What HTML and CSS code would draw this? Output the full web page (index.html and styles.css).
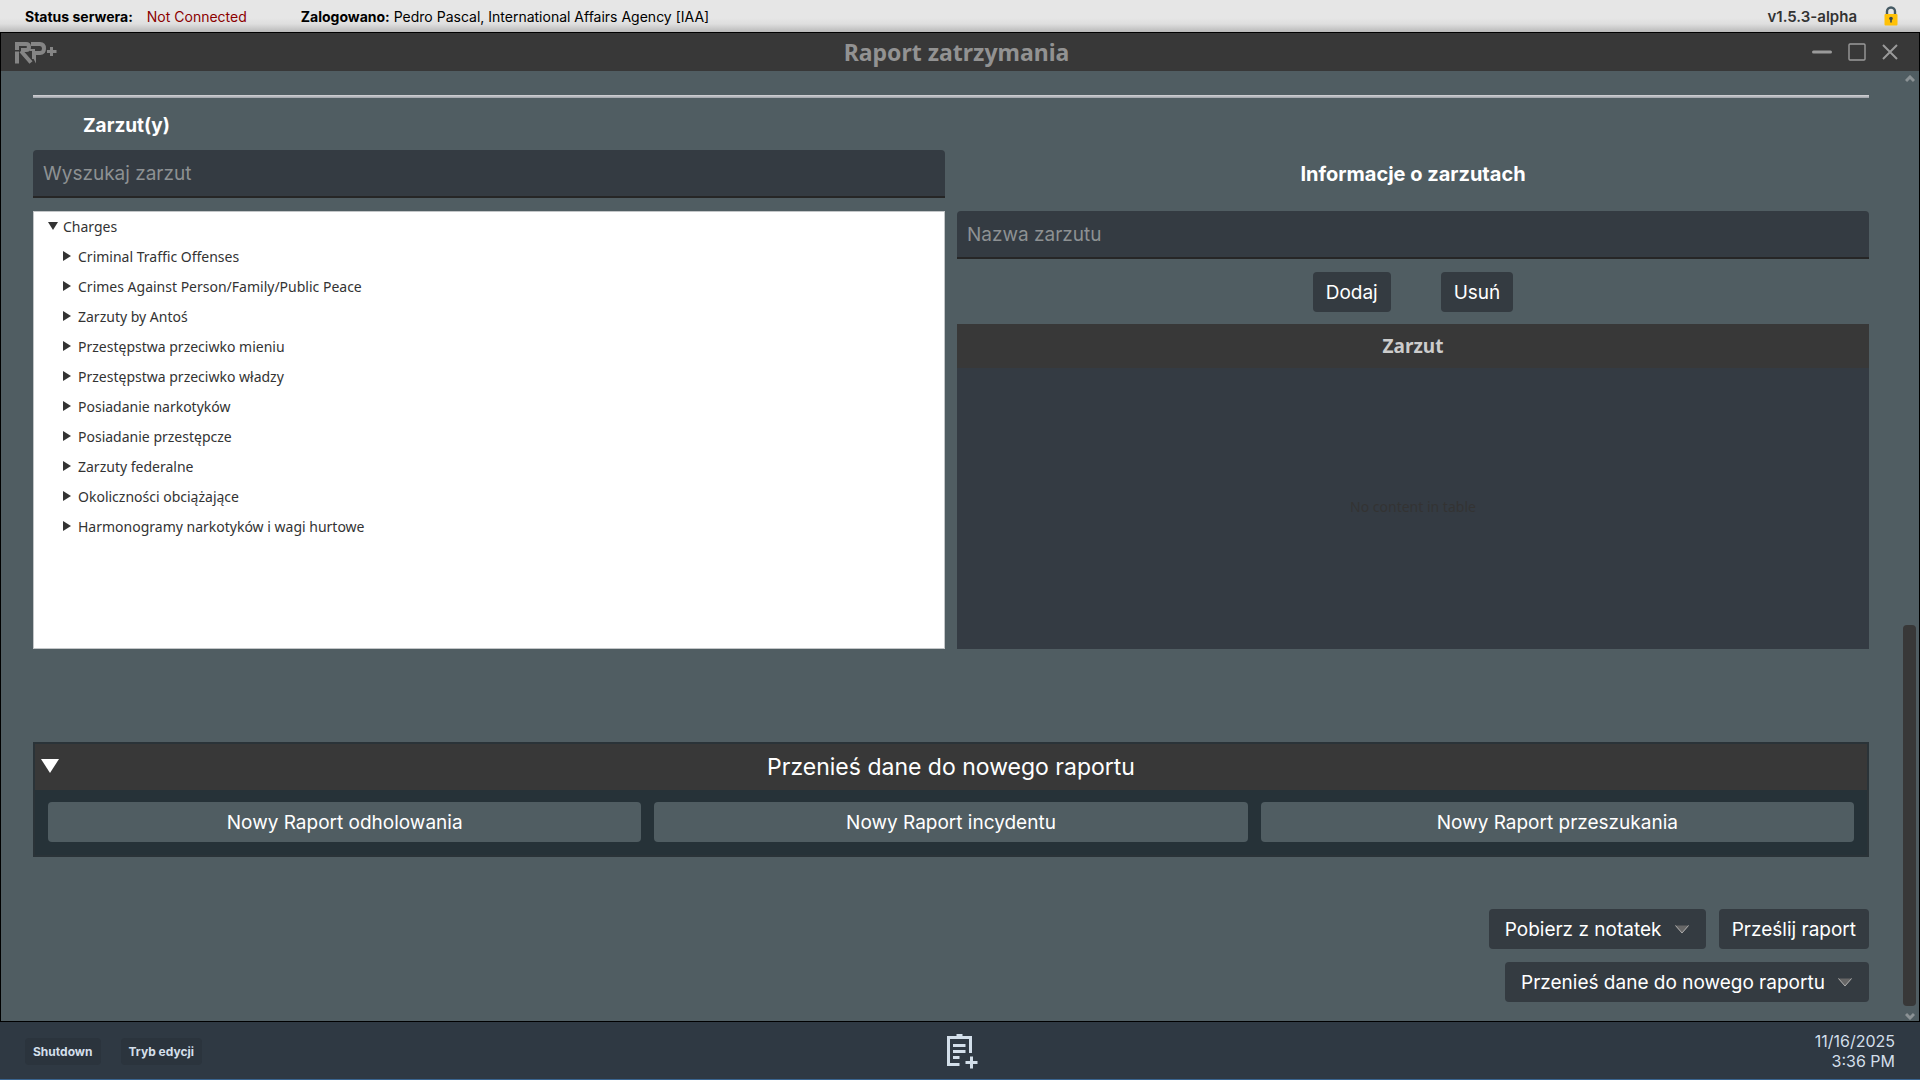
FILE: index.html
```html
<!DOCTYPE html>
<html lang="pl">
<head>
    <meta charset="UTF-8">
    <meta name="viewport" content="width=device-width, initial-scale=1.0">
    <title>Raport zatrzymania</title>
    <link rel="stylesheet" href="styles.css">
</head>
<body>
    <header class="status-bar">
        <p class="server"><b>Status serwera:</b> <span class="offline">Not Connected</span></p>
        <p class="user"><b>Zalogowano:</b> Pedro Pascal, International Affairs Agency [IAA]</p>
        <b class="version">v1.5.3-alpha</b>
        <svg class="lock" width="14" height="20" viewBox="0 0 14 20">
            <path d="M3 9V5.500a4 4 0 0 1 8 0V9" fill="none" stroke="#455a64" stroke-width="2.400"/>
            <rect x="0.500" y="8" width="13" height="11.500" rx="1" fill="#ffc107"/>
            <circle cx="7" cy="12.500" r="1.800" fill="#37474f"/>
            <rect x="6.200" y="12.500" width="1.600" height="4" fill="#37474f"/>
        </svg>
    </header>

    <main class="window">
        <div class="title-bar">
            <svg class="logo" width="42" height="24" viewBox="0 -2 42 24">
                <g fill="none" stroke="#858585" stroke-width="4">
                    <path d="M2 8V2H11q3 0 3 3t-3 3H6"/>
                    <path d="M2 9.500v12M6 9l10 11.500"/>
                    <path d="M16 2h9q4 0 4 4.500t-4 4.500h-6V17"/>
                    <path d="M32 9.500h9.500M36.500 5v9" stroke-width="3"/>
                </g>
                <path d="M17 14h4v7.500z" fill="#858585"/>
                <path d="M15 7h5v2h-5z" fill="#858585"/>
            </svg>
            <h1>Raport zatrzymania</h1>
            <div class="window-buttons">
                <button type="button" aria-label="Minimalizuj">
                    <svg width="20" height="16" viewBox="0 0 20 16"><path d="M1.500 8h17" stroke="#9a9a9a" stroke-width="3" stroke-linecap="round"/></svg>
                </button>
                <button type="button" aria-label="Maksymalizuj">
                    <svg width="18" height="18" viewBox="0 0 18 18"><rect x="1" y="1" width="16" height="16" rx="1" fill="none" stroke="#9a9a9a" stroke-width="1.400"/></svg>
                </button>
                <button type="button" aria-label="Zamknij">
                    <svg width="16" height="16" viewBox="0 0 16 16"><path d="M1 1l14 14M15 1l-14 14" stroke="#9a9a9a" stroke-width="2"/></svg>
                </button>
            </div>
        </div>

        <div class="window-body">
            <form class="report">
                <hr>
                <h2 class="section-title">Zarzut(y)</h2>

                <div class="charges">
                    <input type="text" placeholder="Wyszukaj zarzut" aria-label="Wyszukaj zarzut">
                    <h2 class="info-title">Informacje o zarzutach</h2>

                    <div class="tree">
                        <details open>
                            <summary>Charges</summary>
                            <details><summary>Criminal Traffic Offenses</summary></details>
                            <details><summary>Crimes Against Person/Family/Public Peace</summary></details>
                            <details><summary>Zarzuty by Antoś</summary></details>
                            <details><summary>Przestępstwa przeciwko mieniu</summary></details>
                            <details><summary>Przestępstwa przeciwko władzy</summary></details>
                            <details><summary>Posiadanie narkotyków</summary></details>
                            <details><summary>Posiadanie przestępcze</summary></details>
                            <details><summary>Zarzuty federalne</summary></details>
                            <details><summary>Okoliczności obciążające</summary></details>
                            <details><summary>Harmonogramy narkotyków i wagi hurtowe</summary></details>
                        </details>
                    </div>

                    <div class="charge-info">
                        <input type="text" placeholder="Nazwa zarzutu" aria-label="Nazwa zarzutu">
                        <div class="charge-buttons">
                            <button type="button" class="btn">Dodaj</button>
                            <button type="button" class="btn">Usuń</button>
                        </div>
                        <table class="charge-table">
                            <thead>
                                <tr><th>Zarzut</th></tr>
                            </thead>
                            <tbody>
                                <tr><td>No content in table</td></tr>
                            </tbody>
                        </table>
                    </div>
                </div>

                <details class="transfer" open>
                    <summary>Przenieś dane do nowego raportu</summary>
                    <div class="transfer-buttons">
                        <button type="button" class="btn">Nowy Raport odholowania</button>
                        <button type="button" class="btn">Nowy Raport incydentu</button>
                        <button type="button" class="btn">Nowy Raport przeszukania</button>
                    </div>
                </details>

                <div class="actions">
                    <div class="action-row">
                        <select class="btn" aria-label="Pobierz z notatek">
                            <option>Pobierz z notatek</option>
                        </select>
                        <button type="submit" class="btn">Prześlij raport</button>
                    </div>
                    <select class="btn" aria-label="Przenieś dane do nowego raportu">
                        <option>Przenieś dane do nowego raportu</option>
                    </select>
                </div>
            </form>

            <div class="scrollbar">
                <svg width="10" height="8" viewBox="0 0 10 8"><path d="M1 6l4-4 4 4" fill="none" stroke="#8b9295" stroke-width="3"/></svg>
                <div class="track"><div class="thumb"></div></div>
                <svg width="10" height="8" viewBox="0 0 10 8"><path d="M1 2l4 4 4-4" fill="none" stroke="#8b9295" stroke-width="3"/></svg>
            </div>
        </div>
    </main>

    <footer class="taskbar">
        <div class="task-buttons">
            <button type="button">Shutdown</button>
            <button type="button">Tryb edycji</button>
        </div>
        <button type="button" class="app" aria-label="Nowy raport">
            <svg width="36" height="36" viewBox="-4 0 36 36">
                <g fill="none" stroke="#d3dfea" stroke-width="3">
                    <path d="M13.500 31.500H2.500V4.500h22V20"/>
                    <path d="M7 12.500h12.500M7 18.500h12.500M7 24.500h6.500"/>
                    <path d="M10.500 3h6" stroke-width="4"/>
                    <path d="M19.500 29.500h12M25.500 23.500v12"/>
                </g>
            </svg>
        </button>
        <div class="clock">11/16/2025<br>3:36 PM</div>
    </footer>
</body>
</html>
```

FILE: styles.css
```css
* {
    box-sizing: border-box;
}

body {
    margin: 0;
    min-height: 100vh;
    display: flex;
    flex-direction: column;
    font-family: Inter, Arial, sans-serif;
    font-size: 19px;
    color: white;
    background-color: #2f3943;
}

h1, h2, p {
    margin: 0;
}

button, input, select {
    font-family: inherit;
    border: none;
    margin: 0;
}

button, select, summary {
    cursor: pointer;
}

svg {
    display: block;
}

/* top bar */
.status-bar {
    display: flex;
    align-items: center;
    height: 32px;
    padding: 0 22px 0 25px;
    font-size: 14px;
    color: black;
    background: linear-gradient(#e6e6e6 18px, #dedede 24px, #b9b9b9 32px);
}

.offline {
    margin-left: 10px;
    color: #8b0000;
}

.user {
    margin-left: 54px;
}

.version {
    margin-left: auto;
    margin-right: 27px;
    font-size: 15px;
    font-weight: 600;
    color: #333;
}

/* report window */
.window {
    flex: 1;
    display: flex;
    flex-direction: column;
    border: 1px solid black;
    background-color: #505d62;
}

.title-bar {
    display: grid;
    grid-template-columns: 1fr auto 1fr;
    align-items: center;
    height: 38px;
    padding: 0 21px 0 14px;
    background-color: #383838;
}

.title-bar h1 {
    font-family: "Noto Sans", sans-serif;
    font-size: 23px;
    line-height: 38px;
    color: #929292;
}

.window-buttons {
    display: flex;
    align-items: center;
    justify-content: flex-end;
    gap: 16px;
}

.window-buttons button {
    padding: 0;
    background: none;
}

.window-body {
    flex: 1;
    display: flex;
}

.report {
    flex: 1;
    padding: 24px 33px 19px 32px;
}

.report hr {
    height: 3px;
    margin: 0;
    border: none;
    background: linear-gradient(#d5d5d8, #9da1a8);
}

.section-title {
    padding: 15px 50px 12px;
    font-size: 19px;
    line-height: 25px;
}

.info-title {
    font-size: 20px;
    line-height: 48px;
    text-align: center;
}

.charges {
    display: grid;
    grid-template-columns: 1fr 1fr;
    gap: 13px 12px;
}

.charges input {
    width: 100%;
    height: 48px;
    padding: 0 10px;
    font-size: 19px;
    color: white;
    background-color: #343b42;
    border-bottom: 2px solid #262626;
    border-radius: 4px 4px 0 0;
}

.charges input::placeholder {
    color: #8d9193;
}

/* charges tree */
.tree {
    height: 438px;
    padding-left: 14px;
    font-family: "Noto Sans", sans-serif;
    font-size: 14px;
    color: #333;
    background-color: white;
    border: 1px solid #c3c6c8;
}

.tree summary {
    display: flex;
    align-items: center;
    gap: 7px;
    height: 30px;
    padding-bottom: 2px;
}

.tree summary::before {
    content: "";
    width: 8px;
    height: 10px;
    background-color: #333;
    clip-path: polygon(0 0, 100% 50%, 0 100%);
}

.tree details[open] > summary {
    gap: 5px;
}

.tree details[open] > summary::before {
    width: 10px;
    height: 8px;
    clip-path: polygon(0 0, 100% 0, 50% 100%);
}

.tree details details {
    padding-left: 15px;
}

/* selected charges */
.charge-info {
    display: flex;
    flex-direction: column;
}

.charge-buttons {
    display: flex;
    justify-content: center;
    gap: 50px;
    padding: 13px 0 12px;
}

.btn {
    height: 40px;
    padding: 0 13px;
    font-size: 19px;
    color: white;
    background-color: #343b41;
    border-radius: 4px;
}

.charge-table {
    flex: 1;
    display: flex;
    flex-direction: column;
    background-color: #343b43;
}

.charge-table thead,
.charge-table tbody,
.charge-table tr {
    display: grid;
}

.charge-table tbody {
    flex: 1;
    align-items: center;
}

.charge-table th {
    padding: 0;
    font-family: "Noto Sans", sans-serif;
    font-size: 19px;
    line-height: 44px;
    color: #ccc;
    background-color: #383838;
}

.charge-table td {
    padding: 0 0 4px;
    font-family: "Noto Sans", sans-serif;
    font-size: 14px;
    text-align: center;
    color: #333;
}

/* transfer panel */
.transfer {
    margin: 93px 0 52px;
    border: 2px solid #2a3338;
    background-color: #263238;
}

.transfer summary {
    position: relative;
    display: block;
    font-size: 23px;
    line-height: 46px;
    text-align: center;
    background-color: #383838;
}

.transfer summary::before {
    content: "";
    position: absolute;
    left: 6px;
    top: 15px;
    width: 18px;
    height: 14px;
    background-color: white;
    clip-path: polygon(0 0, 100% 0, 50% 100%);
}

.transfer-buttons {
    display: grid;
    grid-template-columns: repeat(3, 1fr);
    gap: 13px;
    padding: 12px 13px 13px;
}

.transfer-buttons .btn {
    background-color: #505d62;
}

.actions {
    display: flex;
    flex-direction: column;
    align-items: flex-end;
    gap: 13px;
}

.action-row {
    display: flex;
    gap: 13px;
}

select.btn {
    appearance: none;
    padding: 0 44px 0 16px;
    background-image: url("data:image/svg+xml,%3Csvg xmlns='http://www.w3.org/2000/svg' width='14' height='9'%3E%3Cpath d='M0 .5h14L7 8.500z' fill='%23666'/%3E%3Cpath d='M.5 .5L7 8l6.500-7.500' fill='none' stroke='%23aaa'/%3E%3C/svg%3E");
    background-repeat: no-repeat;
    background-position: right 17px center;
}

/* window scrollbar */
.scrollbar {
    display: flex;
    flex-direction: column;
    align-items: center;
    width: 17px;
    padding: 4px 3px 1px 1px;
}

.track {
    flex: 1;
    display: flex;
    flex-direction: column;
    justify-content: flex-end;
    width: 13px;
    padding: 6px 0;
}

.thumb {
    height: 41.5%;
    border-radius: 4px;
    background-color: #383838;
}

/* taskbar */
.taskbar {
    display: grid;
    grid-template-columns: 1fr auto 1fr;
    align-items: center;
    height: 58px;
    padding: 1px 25px 0;
    color: #d3dfea;
    border-bottom: 1px solid #3a6590;
}

.task-buttons {
    display: flex;
    gap: 20px;
}

.task-buttons button {
    height: 27px;
    padding: 0 8px;
    font-size: 12px;
    font-weight: 700;
    color: #d3dfea;
    background-color: #2b343d;
    border-radius: 4px;
}

.taskbar .app {
    padding: 0;
    background: none;
}

.clock {
    font-size: 16px;
    line-height: 20px;
    text-align: right;
}
```
